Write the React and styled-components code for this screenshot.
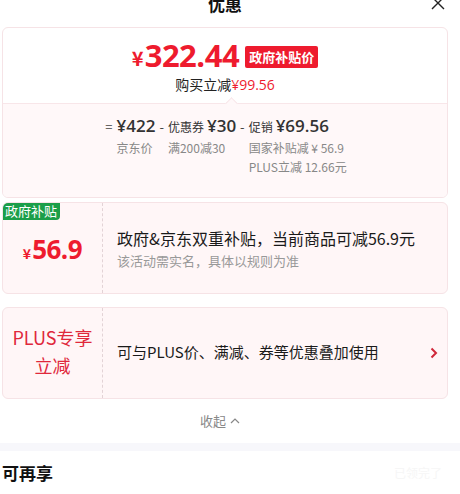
import React from "react";
import styled, { createGlobalStyle } from "styled-components";

const GlobalStyle = createGlobalStyle`
  html, body {
    margin: 0;
    padding: 0;
    background: #fff;
    font-family: "Noto Sans CJK SC", "Noto Sans", sans-serif;
    color: #222;
    overflow: hidden;
  }
`;

const Page = styled.div`
  width: 460px;
  height: 494px;
  overflow: hidden;
`;

const Header = styled.div`
  height: 27px;
  position: relative;
  display: flex;
  justify-content: center;
`;

const Title = styled.div`
  font-size: 17px;
  font-weight: 700;
  line-height: 17px;
  margin-top: -5px;
  margin-right: 10px;
  color: #111;
`;

const Close = styled.svg`
  position: absolute;
  right: 15px;
  top: -4px;
`;

const Body = styled.div`
  padding: 0 12px 0 2px;
  display: flex;
  flex-direction: column;
`;

const Card = styled.div`
  border: 1px solid #f6e3e6;
  border-radius: 6px;
  overflow: hidden;
  background: ${(p) => p.$bg || "#fff"};
  margin-bottom: ${(p) => p.$mb || 0}px;
  position: relative;
`;

const PriceTop = styled.div`
  height: 75px;
  display: flex;
  flex-direction: column;
  align-items: center;
  padding-top: 10px;
  box-sizing: border-box;
`;

const PriceLine = styled.div`
  display: flex;
  align-items: center;
  color: #ee1b2e;
  height: 34px;
`;

const Yen = styled.span`
  font-size: ${(p) => p.$size}px;
  font-weight: 700;
  margin-right: 1px;
  margin-top: ${(p) => p.$mt || 0}px;
`;

const BigNum = styled.span`
  font-family: "Open Sans", "Noto Sans", sans-serif;
  font-size: ${(p) => p.$size}px;
  font-weight: 700;
  letter-spacing: -0.5px;
  line-height: 1;
`;

const RedBadge = styled.span`
  background: #ee1b2e;
  color: #fff;
  font-size: 13px;
  font-weight: 700;
  padding: 0 4px;
  height: 22px;
  line-height: 22px;
  border-radius: 2px;
  margin-left: 6px;
  margin-top: 3px;
`;

const Saved = styled.div`
  font-size: 14px;
  color: #222;
  margin-top: 2px;
  span {
    color: #ee1b2e;
    font-family: "Open Sans", sans-serif;
  }
`;

const Breakdown = styled.div`
  background: #fff8f9;
  border-top: 1px solid #f8e6e9;
  height: 94px;
  position: relative;
  display: flex;
  justify-content: center;
  padding-top: 11px;
  box-sizing: border-box;
  &::before {
    content: "";
    position: absolute;
    top: -5px;
    left: 224px;
    width: 8px;
    height: 8px;
    background: #fff8f9;
    border-left: 1px solid #f8e6e9;
    border-top: 1px solid #f8e6e9;
    transform: rotate(45deg);
  }
`;

const Formula = styled.div`
  display: grid;
  grid-template-columns: repeat(6, auto);
  align-items: baseline;
  align-content: start;
  margin-left: -2px;
`;

const Op = styled.span`
  font-size: 13px;
  line-height: 22px;
  color: #444;
  padding: 0 4px;
`;

const Term = styled.span`
  color: #333;
  font-size: 12px;
  line-height: 22px;
  b {
    font-family: "Open Sans", sans-serif;
    font-weight: 600;
    font-size: 17px;
    margin-left: ${(p) => (p.$gap ? 3 : 0)}px;
  }
`;

const Note = styled.div`
  font-size: 12px;
  color: #888;
  line-height: 19px;
  grid-column: ${(p) => p.$col};
  align-self: start;
`;

const Split = styled.div`
  display: flex;
  height: ${(p) => p.$h}px;
`;

const LeftCol = styled.div`
  width: 99px;
  border-right: 1px dashed #e3d3d6;
  display: flex;
  flex-direction: column;
  align-items: center;
  justify-content: center;
  position: relative;
`;

const GreenTag = styled.span`
  position: absolute;
  top: -1px;
  left: -1px;
  background: #1b9e49;
  color: #fff;
  font-size: 13px;
  line-height: 18px;
  padding: 0 3px;
  border-radius: 4px 0 4px 0;
`;

const SubsidyPrice = styled.div`
  color: #ee1b2e;
  display: flex;
  align-items: baseline;
  margin-top: 2px;
`;

const PlusLabel = styled.div`
  color: #e0283b;
  font-size: 18px;
  line-height: 28px;
  text-align: center;
  margin-top: -5px;
`;

const RightCol = styled.div`
  flex: 1;
  display: flex;
  align-items: center;
  padding-left: 14px;
  padding-right: 9px;
`;

const Texts = styled.div`
  flex: 1;
  display: flex;
  flex-direction: column;
  margin-top: ${(p) => p.$mt || 0}px;
`;

const MainText = styled.div`
  font-size: ${(p) => p.$size}px;
  color: #1a1a1a;
  line-height: 24px;
`;

const SubText = styled.div`
  font-size: 13px;
  color: #999;
  line-height: 20px;
  margin-top: 1px;
`;

const Collapse = styled.div`
  height: 46px;
  display: flex;
  align-items: center;
  justify-content: center;
  gap: 4px;
  font-size: 13px;
  color: #888;
  margin-right: 10px;
  margin-top: -2px;
`;

const Band = styled.div`
  height: 8px;
  background: #f7f7fb;
`;

const Section = styled.div`
  display: flex;
  justify-content: space-between;
  align-items: center;
  padding: 9px 14px 0 2px;
`;

const SectionTitle = styled.div`
  font-size: 17px;
  font-weight: 700;
  color: #111;
`;

const Faint = styled.div`
  font-size: 12px;
  color: #f6f6f6;
  margin-right: 4px;
`;

export default function App() {
  return (
    <Page>
      <GlobalStyle />
      <Header>
        <Title>优惠</Title>
        <Close width="14" height="14" viewBox="0 0 14 14">
          <path d="M1 1 L13 13 M13 1 L1 13" stroke="#222" strokeWidth="1.4" fill="none" />
        </Close>
      </Header>
      <Body>
        <Card $mb={4}>
          <PriceTop>
            <PriceLine>
              <Yen $size={20} $mt={4}>¥</Yen>
              <BigNum $size={31}>322.44</BigNum>
              <RedBadge>政府补贴价</RedBadge>
            </PriceLine>
            <Saved>
              购买立减<span>¥99.56</span>
            </Saved>
          </PriceTop>
          <Breakdown>
            <Formula>
              <Op>=</Op>
              <Term><b>¥422</b></Term>
              <Op>-</Op>
              <Term $gap>优惠券<b>¥30</b></Term>
              <Op>-</Op>
              <Term $gap>促销<b>¥69.56</b></Term>
              <Note $col="2">京东价</Note>
              <Note $col="4">满200减30</Note>
              <Note $col="6">
                国家补贴减 ¥ 56.9
                <br />
                PLUS立减 12.66元
              </Note>
            </Formula>
          </Breakdown>
        </Card>
        <Card $bg="#fff6f7" $mb={13}>
          <Split $h={90}>
            <LeftCol>
              <GreenTag>政府补贴</GreenTag>
              <SubsidyPrice>
                <Yen $size={14}>¥</Yen>
                <BigNum $size={26}>56.9</BigNum>
              </SubsidyPrice>
            </LeftCol>
            <RightCol>
              <Texts>
                <MainText $size={16}>政府&amp;京东双重补贴，当前商品可减56.9元</MainText>
                <SubText>该活动需实名，具体以规则为准</SubText>
              </Texts>
            </RightCol>
          </Split>
        </Card>
        <Card $bg="#fff6f7">
          <Split $h={90}>
            <LeftCol>
              <PlusLabel>
                PLUS专享
                <br />
                立减
              </PlusLabel>
            </LeftCol>
            <RightCol>
              <Texts $mt={-3}>
                <MainText $size={15}>可与PLUS价、满减、券等优惠叠加使用</MainText>
              </Texts>
              <svg width="8" height="12" viewBox="0 0 8 12">
                <path d="M1.5 1.5 L6 6 L1.5 10.5" stroke="#d0283a" strokeWidth="2" fill="none" />
              </svg>
            </RightCol>
          </Split>
        </Card>
        <Collapse>
          收起
          <svg width="10" height="7" viewBox="0 0 10 7">
            <path d="M1 6 L5 2 L9 6" stroke="#888" strokeWidth="1.2" fill="none" />
          </svg>
        </Collapse>
      </Body>
      <Band />
      <Section>
        <SectionTitle>可再享</SectionTitle>
        <Faint>已领完了</Faint>
      </Section>
    </Page>
  );
}
